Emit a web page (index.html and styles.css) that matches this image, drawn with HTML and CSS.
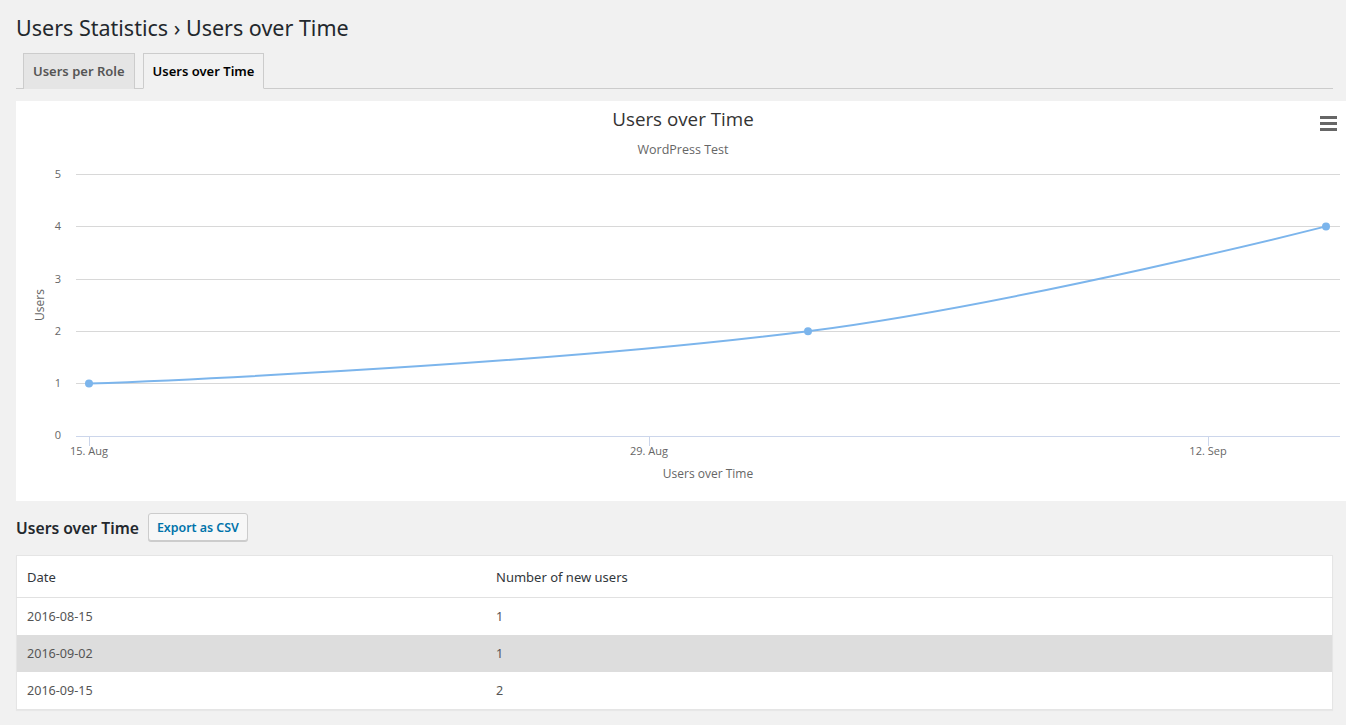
FILE: index.html
```html
<!DOCTYPE html>
<html>
<head>
<meta charset="utf-8">
<link rel="stylesheet" href="styles.css">
</head>
<body>
<div class="wrap">
  <h1 class="page-title">Users Statistics › Users over Time</h1>
  <nav class="tabs">
    <a class="tab">Users per Role</a>
    <a class="tab active">Users over Time</a>
  </nav>
  <div class="chart-card">
    <svg class="chart" width="1330" height="400" viewBox="0 0 1330 400">
      <text class="c-title" x="667" y="25" text-anchor="middle">Users over Time</text>
      <text class="c-sub" x="667" y="53" text-anchor="middle">WordPress Test</text>
      <g class="menu">
        <rect x="1304" y="15" width="17" height="3"/>
        <rect x="1304" y="21" width="17" height="3"/>
        <rect x="1304" y="27" width="17" height="3"/>
      </g>
      <g class="grid">
        <line x1="60" y1="73.5" x2="1324" y2="73.5"/>
        <line x1="60" y1="125.5" x2="1324" y2="125.5"/>
        <line x1="60" y1="178.5" x2="1324" y2="178.5"/>
        <line x1="60" y1="230.5" x2="1324" y2="230.5"/>
        <line x1="60" y1="282.5" x2="1324" y2="282.5"/>
      </g>
      <g class="axis">
        <line x1="60" y1="335.5" x2="1324" y2="335.5"/>
        <line x1="73.5" y1="335" x2="73.5" y2="345"/>
        <line x1="633.5" y1="335" x2="633.5" y2="345"/>
        <line x1="1192.5" y1="335" x2="1192.5" y2="345"/>
      </g>
      <g class="ylabels">
        <text x="45" y="77">5</text>
        <text x="45" y="129">4</text>
        <text x="45" y="182">3</text>
        <text x="45" y="234">2</text>
        <text x="45" y="286">1</text>
        <text x="45" y="338">0</text>
      </g>
      <g class="xlabels">
        <text x="73" y="354">15. Aug</text>
        <text x="633" y="354">29. Aug</text>
        <text x="1192" y="354">12. Sep</text>
      </g>
      <text class="axis-title" x="692" y="377" text-anchor="middle">Users over Time</text>
      <text class="axis-title" x="0" y="0" text-anchor="middle" transform="translate(28 204) rotate(-90)">Users</text>
      <path class="series" d="M73,282.6 C73,282.6 504.4,266.75 792,230.2 C999.2,203.87 1310,125.4 1310,125.4"/>
      <g class="points">
        <circle cx="73" cy="282.6" r="4"/>
        <circle cx="792" cy="230.2" r="4"/>
        <circle cx="1310" cy="125.6" r="4"/>
      </g>
    </svg>
  </div>
  <div class="section-head">
    <h2 class="section-title">Users over Time</h2>
    <button class="btn">Export as CSV</button>
  </div>
  <table class="data">
    <thead>
      <tr><th class="col-date">Date</th><th>Number of new users</th></tr>
    </thead>
    <tbody>
      <tr><td>2016-08-15</td><td>1</td></tr>
      <tr class="alt"><td>2016-09-02</td><td>1</td></tr>
      <tr><td>2016-09-15</td><td>2</td></tr>
    </tbody>
  </table>
</div>
</body>
</html>
```

FILE: styles.css
```css
html, body {
  margin: 0;
  padding: 0;
  background: #f1f1f1;
}
body {
  font-family: "Noto Sans", "Open Sans", sans-serif;
  color: #23282d;
  width: 1346px;
  height: 725px;
  overflow: hidden;
}
.wrap {
  padding: 13px 0 0 16px;
}
.page-title {
  margin: 0 0 11px;
  font-size: 21.5px;
  line-height: 29px;
  font-weight: 400;
  color: #23282d;
}
.tabs {
  display: flex;
  gap: 8px;
  width: 1310px;
  padding-left: 7px;
  border-bottom: 1px solid #ccc;
  height: 35px;
}
.tab {
  display: block;
  box-sizing: border-box;
  height: 36px;
  padding: 0 9px;
  border: 1px solid #ccc;
  border-bottom: none;
  background: #e5e5e5;
  color: #555;
  font-size: 13px;
  font-weight: 600;
  line-height: 34px;
}
.tab.active {
  background: #f1f1f1;
  color: #000;
  border-bottom: 1px solid #f1f1f1;
}
.chart-card {
  margin-top: 12px;
  width: 1330px;
  height: 400px;
  background: #fff;
}
.chart {
  display: block;
  font-family: "Open Sans", "DejaVu Sans", sans-serif;
}
.c-title {
  font-size: 18.8px;
  fill: #333;
}
.c-sub {
  font-size: 12.5px;
  fill: #666;
}
.menu rect {
  fill: #666;
}
.grid line {
  stroke: #d8d8d8;
  stroke-width: 1;
}
.axis line {
  stroke: #ccd6eb;
  stroke-width: 1;
}
.ylabels text {
  font-size: 11px;
  fill: #666;
  text-anchor: end;
}
.xlabels text {
  font-size: 11px;
  fill: #666;
  text-anchor: middle;
}
.axis-title {
  font-size: 12px;
  fill: #666;
}
.series {
  fill: none;
  stroke: #7cb5ec;
  stroke-width: 2;
}
.points circle {
  fill: #7cb5ec;
}
.section-head {
  display: flex;
  align-items: center;
  gap: 9px;
  margin-top: 12px;
  height: 28px;
}
.section-title {
  margin: 2px 0 0;
  font-size: 15.7px;
  font-weight: 600;
  color: #23282d;
}
.btn {
  height: 28px;
  padding: 0 8px;
  border: 1px solid #ccc;
  border-radius: 3px;
  background: #f7f7f7;
  color: #0073aa;
  font-family: inherit;
  font-size: 12.4px;
  font-weight: 600;
  box-shadow: 0 1px 0 #ccc;
}
.data {
  margin-top: 14px;
  width: 1317px;
  border-collapse: collapse;
  background: #fff;
  border: 1px solid #e5e5e5;
  box-shadow: 0 1px 1px rgba(0,0,0,0.04);
}
.data th {
  text-align: left;
  font-weight: 400;
  font-size: 13px;
  color: #32373c;
  height: 41px;
  padding: 0 10px;
  border-bottom: 1px solid #e1e1e1;
}
.data th.col-date {
  width: 449px;
}
.data td {
  font-size: 12.6px;
  color: #555;
  height: 37px;
  padding: 0 10px;
}
.data tr.alt td {
  background: #ddd;
}
```
